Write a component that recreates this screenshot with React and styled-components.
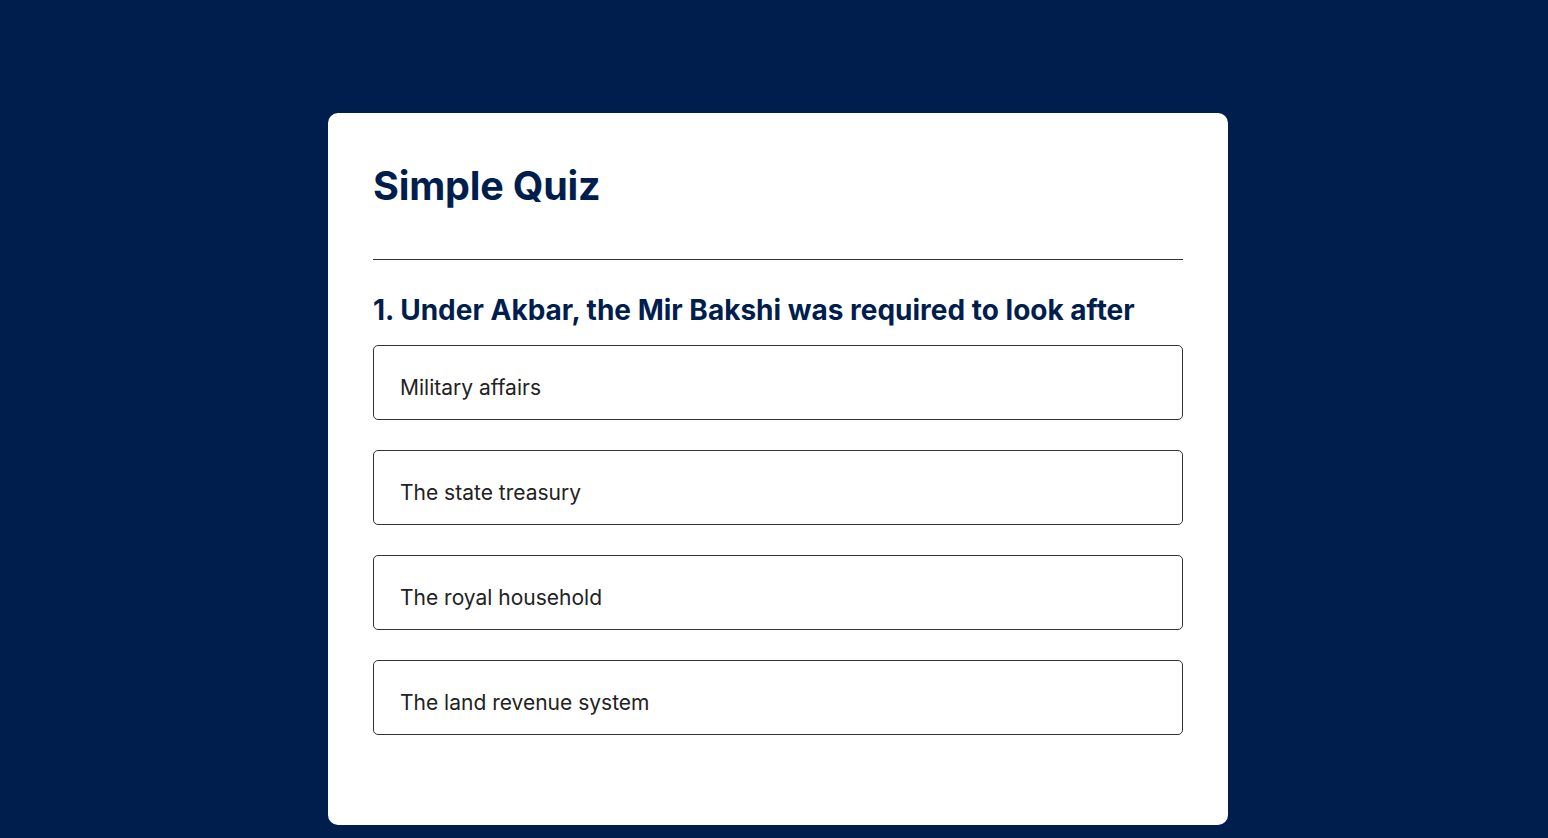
import React from "react";
import styled, { createGlobalStyle } from "styled-components";

const Global = createGlobalStyle`
  html, body { margin: 0; padding: 0; }
  body {
    background: #001e4d;
    font-family: Inter, "Noto Sans", sans-serif;
  }
`;

const Page = styled.div`
  min-height: 838px;
  padding: 113px 0 0 8px;
  box-sizing: border-box;
`;

const Card = styled.div`
  width: 900px;
  margin: 0 auto;
  background: #ffffff;
  border-radius: 10px;
  padding: 47px 45px 90px;
  box-sizing: border-box;
`;

const Title = styled.h1`
  margin: 0;
  font-size: 39.5px;
  line-height: 52px;
  font-weight: 700;
  color: #001e4d;
  letter-spacing: -0.2px;
`;

const Divider = styled.hr`
  margin: 47px 0 0;
  border: none;
  height: 1px;
  background: #333;
`;

const Question = styled.h2`
  margin: 31px 0 0;
  font-size: 28px;
  line-height: 38px;
  font-weight: 700;
  color: #001e4d;
  letter-spacing: 0;
`;

const Options = styled.ul`
  list-style: none;
  margin: 16px 0 0;
  padding: 0;
  display: flex;
  flex-direction: column;
  gap: 30px;
`;

const Option = styled.li`
  height: 75px;
  box-sizing: border-box;
  border: 1px solid #333;
  border-radius: 5px;
  padding: 28px 26px 0;
  font-size: 21px;
  line-height: 28px;
  color: #222;
`;

const options = [
  "Military affairs",
  "The state treasury",
  "The royal household",
  "The land revenue system",
];

export default function App() {
  return (
    <>
      <Global />
      <Page>
        <Card>
          <Title>Simple Quiz</Title>
          <Divider />
          <Question>1. Under Akbar, the Mir Bakshi was required to look after</Question>
          <Options>
            {options.map((o) => (
              <Option key={o}>{o}</Option>
            ))}
          </Options>
        </Card>
      </Page>
    </>
  );
}
